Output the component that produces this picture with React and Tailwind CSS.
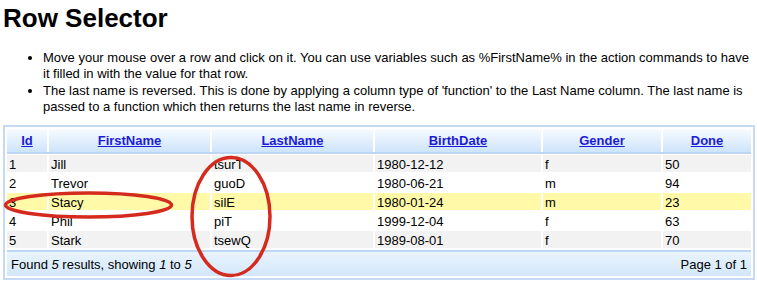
const ROWS = [
  { id: 1, first: "Jill", last: "tsurT", birth: "1980-12-12", gender: "f", done: 50 },
  { id: 2, first: "Trevor", last: "guoD", birth: "1980-06-21", gender: "m", done: 94 },
  { id: 3, first: "Stacy", last: "silE", birth: "1980-01-24", gender: "m", done: 23 },
  { id: 4, first: "Phil", last: "piT", birth: "1999-12-04", gender: "f", done: 63 },
  { id: 5, first: "Stark", last: "tsewQ", birth: "1989-08-01", gender: "f", done: 70 },
];

const COLS = ["Id", "FirstName", "LastName", "BirthDate", "Gender", "Done"];
const GRID = "grid grid-cols-[40px_161px_161px_166px_118px_88px] gap-x-[2px]";

function rowBg(i) {
  if (i === 2) return "bg-[#fff9a8]";
  return i % 2 === 0 ? "bg-[#f2f2f2]" : "bg-white";
}

export default function App() {
  return (
    <div className="relative w-[757px] h-[287px] bg-white text-black font-['Liberation_Sans',Arial,sans-serif] overflow-hidden">
      <h1 className="ml-[3px] pt-[3px] text-[26px] leading-[30px] font-bold">Row Selector</h1>

      <ul className="mt-[17px] ml-[43px] mr-[8px] list-disc text-[13px] leading-[16px]">
        <li>
          Move your mouse over a row and click on it. You can use variables such as %FirstName% in the action commands
          to have it filled in with the value for that row.
        </li>
        <li className="mt-[1px]">
          The last name is reversed. This is done by applying a column type of 'function' to the Last Name column. The
          last name is passed to a function which then returns the last name in reverse.
        </li>
      </ul>

      <div className="absolute left-[3px] top-[125px] w-[752px] border-2 border-[#c4daf5] p-[2px] text-[13px]">
        <div className={GRID}>
          {COLS.map((c) => (
            <div
              key={c}
              className="h-[23px] flex items-center justify-center bg-linear-to-b from-[#f8fbff] to-[#cde4fb] font-bold text-[#1c1cd8] underline"
            >
              {c}
            </div>
          ))}
        </div>
        <div className="h-[2px] bg-[#bcd6f3] mb-[1px]" />

        <div className="flex flex-col gap-[2px]">
          {ROWS.map((r, i) => (
            <div key={r.id} className={GRID}>
              {[r.id, r.first, r.last, r.birth, r.gender, r.done].map((v, j) => (
                <div key={j} className={`h-[17px] leading-[19px] px-[2px] ${rowBg(i)}`}>
                  {v}
                </div>
              ))}
            </div>
          ))}
        </div>

        <div className="mt-[2px] border-t-2 border-[#bcd6f3] h-[26px] flex items-center justify-between px-[4px] pt-[1px] bg-linear-to-b from-[#eaf4fe] to-[#d2e7fb]">
          <span>
            Found <i>5</i> results, showing <i>1</i> to <i>5</i>
          </span>
          <span>Page 1 of 1</span>
        </div>
      </div>

      <svg className="absolute inset-0 pointer-events-none" width="757" height="287" viewBox="0 0 757 287">
        <ellipse cx="88.5" cy="205" rx="83" ry="12" fill="none" stroke="#d52b1e" strokeWidth="3.5" />
        <ellipse cx="231" cy="216.5" rx="39" ry="59" fill="none" stroke="#d52b1e" strokeWidth="3.5" />
      </svg>
    </div>
  );
}
